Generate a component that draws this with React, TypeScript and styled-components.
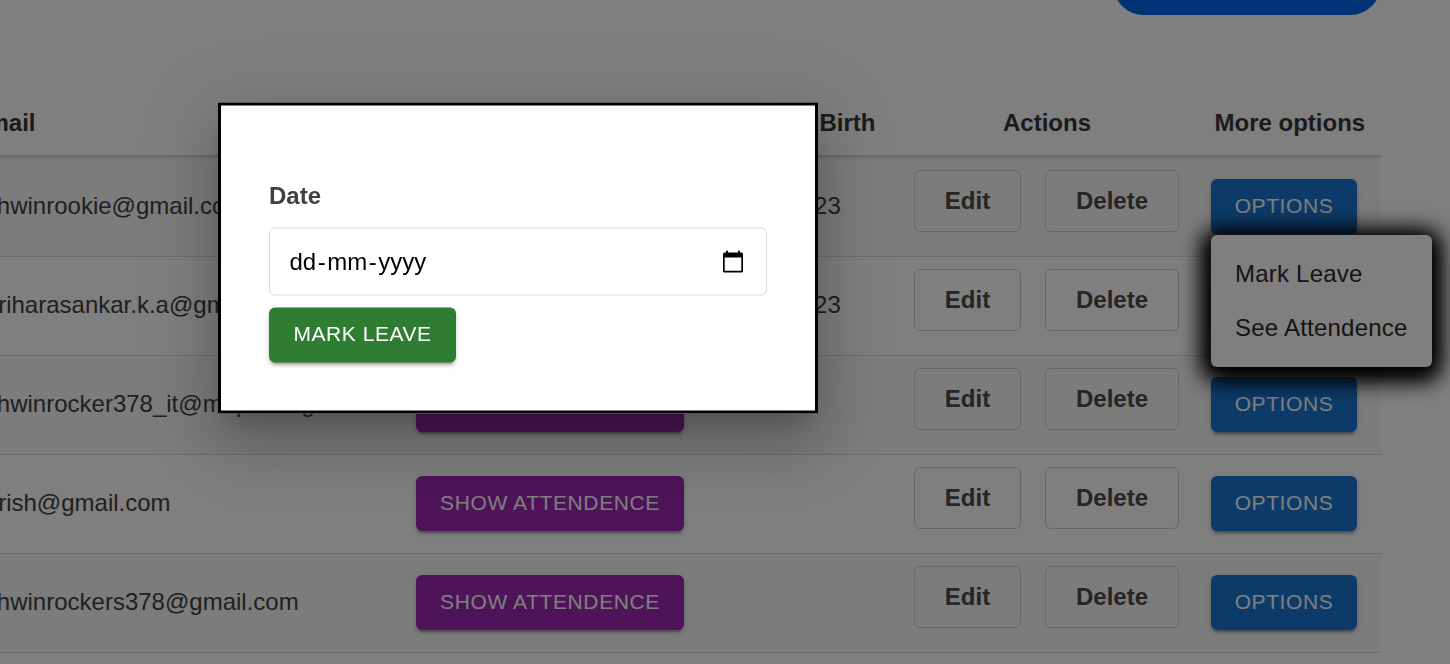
import React from "react";
import styled, { createGlobalStyle, css } from "styled-components";

const GlobalStyle = createGlobalStyle`
  * { box-sizing: border-box; }
  html, body { margin: 0; height: 100%; overflow: hidden; background: #fff; }
  body {
    font-family: "Liberation Sans", Arial, Helvetica, sans-serif;
    font-size: 24px;
    line-height: 36px;
    color: #404040;
  }
  button { font-family: inherit; cursor: pointer; }
`;

const Page = styled.main`
  height: 664px;
  width: 1450px;
  overflow: hidden;
  background: #fff;
`;

const TopBar = styled.header`
  display: flex;
  justify-content: flex-end;
  height: 15px;
  padding-right: 69px;
`;

const AddButton = styled.button`
  width: 268px;
  height: 62px;
  margin-top: -47px;
  border: 0;
  border-radius: 38px;
  background: #0066ea;
`;

const Table = styled.section`
  width: 1381px;
  margin-top: 75px;
`;

const columns = css`
  display: grid;
  grid-template-columns: 416px 303px 183px 289px 190px;
  & > :first-child { margin-left: -28.5px; }
`;

const HeadRow = styled.div`
  ${columns}
  height: 68px;
  padding-top: 15px;
  border-bottom: 3px solid #dbdbdb;
  color: #363636;
  font-weight: 700;
`;

const HeadCell = styled.div<{ $shift?: number }>`
  padding-left: ${(p) => p.$shift ?? 0}px;
  white-space: nowrap;
`;

const Row = styled.div`
  ${columns}
  height: 99px;
  border-bottom: 1px solid #dbdbdb;
  &:nth-child(even) { background: #f8f8f8; }
`;

const TextCell = styled.div`
  padding-top: 30px;
  white-space: nowrap;
`;

const DateCell = styled(TextCell)`
  margin-left: -1px;
`;

const ButtonCell = styled.div<{ $inset?: number }>`
  padding: 21px 0 0 ${(p) => p.$inset ?? 0}px;
`;

const ActionCell = styled.div`
  display: flex;
  gap: 24px;
  padding: 12px 0 0 12px;
`;

const OutlineButton = styled.button<{ $width: number }>`
  width: ${(p) => p.$width}px;
  height: 62px;
  padding: 0;
  border: 1px solid #d0d0d0;
  border-radius: 6px;
  background: transparent;
  color: #4a4a4a;
  font-size: 24px;
  font-weight: 700;
`;

const SolidButton = styled.button<{ $color: string; $width: number }>`
  display: block;
  width: ${(p) => p.$width}px;
  height: 55px;
  padding: 0 0 2px;
  border: 0;
  border-radius: 6px;
  background: ${(p) => p.$color};
  color: #fff;
  font-size: 21px;
  line-height: 37px;
  letter-spacing: 0.6px;
  text-transform: uppercase;
  white-space: nowrap;
  box-shadow: 0 4.5px 1.5px -3px rgba(0, 0, 0, 0.2), 0 3px 3px rgba(0, 0, 0, 0.14),
    0 1.5px 7.5px rgba(0, 0, 0, 0.12);
`;

const SubmitButton = styled(SolidButton)`
  padding-bottom: 4px;
  letter-spacing: 0.55px;
`;

const Menu = styled.ul`
  position: absolute;
  left: 1211px;
  top: 235px;
  width: 221px;
  height: 132px;
  margin: 0;
  padding: 12px 0;
  list-style: none;
  border-radius: 6px;
  background: #fff;
  color: #2a2a2a;
  box-shadow: 0 4.5px 26px 6px #000, 0 4.5px 20px 5px #000;
`;

const MenuItem = styled.li`
  height: 54px;
  padding: 9px 24px;
  letter-spacing: 0.22px;
  white-space: nowrap;
`;

const Backdrop = styled.div`
  position: fixed;
  inset: 0;
  background: rgba(0, 0, 0, 0.5);
`;

const Dialog = styled.form`
  position: absolute;
  left: 218px;
  top: 102px;
  transform: translateY(0.5px);
  width: 600px;
  height: 311px;
  padding: 72px 48px 0;
  border: 3px solid #000;
  background: #fff;
  box-shadow: 0 16.5px 22.5px -10.5px rgba(0, 0, 0, 0.2), 0 36px 57px 4.5px rgba(0, 0, 0, 0.14),
    0 13.5px 69px 12px rgba(0, 0, 0, 0.12);
`;

const Label = styled.label`
  display: block;
  height: 50px;
  font-weight: 700;
`;

const DateField = styled.div`
  display: flex;
  align-items: center;
  justify-content: space-between;
  height: 68px;
  margin-bottom: 12px;
  padding: 0 23px 0 19.5px;
  border: 1px solid #dbdbdb;
  border-radius: 6px;
  color: #000;
`;

const DateText = styled.span`
  display: flex;
  gap: 1.5px;
`;

const SHOW = "#9c27b0";
const PRIMARY = "#1976d2";
const SUCCESS = "#2e7d32";

const students = [
  { email: "ashwinrookie@gmail.com", date: "01-04-2023" },
  { email: "hariharasankar.k.a@gmail.com", date: "01-04-2023" },
  { email: "ashwinrocker378_it@mepcoeng.ac.in", date: "" },
  { email: "harish@gmail.com", date: "" },
  { email: "ashwinrockers378@gmail.com", date: "" },
];

const CalendarIcon = () => (
  <svg width="20" height="23" viewBox="0 0 20 23" aria-hidden="true">
    <path
      fill="#000"
      fillRule="evenodd"
      d="M3 0h2v2h10V0h2v2h1.5A1.5 1.5 0 0 1 20 3.5V20.5A1.5 1.5 0 0 1 18.5 22H1.5A1.5 1.5 0 0 1 0 20.5V3.5A1.5 1.5 0 0 1 1.5 2H3zM1.700 7v13.300h16.600V7z"
    />
  </svg>
);

export default function App() {
  return (
    <>
      <GlobalStyle />
      <Page>
        <TopBar>
          <AddButton aria-label="Add" />
        </TopBar>
        <Table>
          <HeadRow>
            <HeadCell>Email</HeadCell>
            <HeadCell>Attendence</HeadCell>
            <HeadCell $shift={12.5}>Date of Birth</HeadCell>
            <HeadCell $shift={101}>Actions</HeadCell>
            <HeadCell $shift={23.5}>More options</HeadCell>
          </HeadRow>
          {students.map((s) => (
            <Row key={s.email}>
              <TextCell>{s.email}</TextCell>
              <ButtonCell>
                <SolidButton $color={SHOW} $width={268}>Show Attendence</SolidButton>
              </ButtonCell>
              <DateCell>{s.date}</DateCell>
              <ActionCell>
                <OutlineButton $width={107}>Edit</OutlineButton>
                <OutlineButton $width={134}>Delete</OutlineButton>
              </ActionCell>
              <ButtonCell $inset={20}>
                <SolidButton $color={PRIMARY} $width={146}>Options</SolidButton>
              </ButtonCell>
            </Row>
          ))}
        </Table>
      </Page>
      <Menu>
        <MenuItem>Mark Leave</MenuItem>
        <MenuItem>See Attendence</MenuItem>
      </Menu>
      <Backdrop />
      <Dialog>
        <Label>Date</Label>
        <DateField>
          <DateText>
            <span>dd</span>
            <span>-</span>
            <span>mm</span>
            <span>-</span>
            <span>yyyy</span>
          </DateText>
          <CalendarIcon />
        </DateField>
        <SubmitButton type="button" $color={SUCCESS} $width={187}>Mark Leave</SubmitButton>
      </Dialog>
    </>
  );
}
